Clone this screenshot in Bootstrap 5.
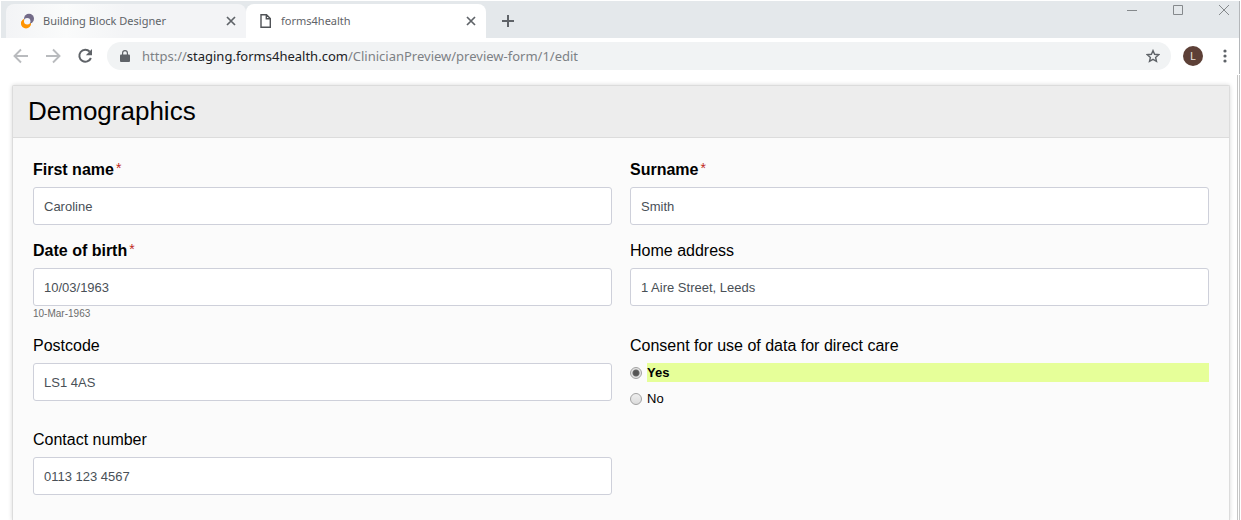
<!DOCTYPE html>
<html lang="en-GB">
<head>
<meta charset="utf-8">
<meta name="viewport" content="width=device-width, initial-scale=1">
<title>forms4health</title>
<link href="https://cdn.jsdelivr.net/npm/bootstrap@5.3.0/dist/css/bootstrap.min.css" rel="stylesheet">
<style>
body{font-family:"Liberation Sans",Arial,sans-serif;color:#000;background:#fff;overflow:hidden}
button{border:0;background:none;padding:0;display:flex;align-items:center;justify-content:center;color:#5f6368}
svg{display:block;flex:none}
.window-top{margin:1px 1px 0;border-right:1px solid #b4b7ba}
.tab-strip{background:#e4e8eb;height:37px;padding:3px 0 0 5px;font:11px/16px "Noto Sans","Open Sans",sans-serif;color:#5f6368}
.browser-tab{width:240px;height:34px;padding:0 10px 0 13px;border-radius:8px 8px 0 0;background:linear-gradient(90deg,#f3f4f6,#fafbfb 25%,#f3f4f6 50%)}
.browser-tab.current{background:#fff}
.browser-tab a,.address a{color:inherit;text-decoration:none}
.new-tab{width:24px;height:34px;margin-left:10px}
.window-buttons{gap:34px;padding-right:9px;height:12px}
.window-buttons button{color:#85898c}
.toolbar{height:36px;gap:12px;padding:0 8px 0 12px}
.nav-buttons{gap:16px;margin-right:2px}
.nav-buttons .inactive{color:#b9bbbe}
.address{height:28px;border-radius:14px;background:#f1f3f4;padding:0 11px 0 13px;font:13px/20px "Noto Sans","Open Sans",sans-serif;color:#7d8185}
.address strong{font-weight:400;color:#202124}
.avatar{width:20px;height:20px;border-radius:50%;background:#5d4037;color:#e8e0dd;font:11px/20px "Noto Sans",sans-serif}
.page-view{margin:1px 1px 0 0;border-right:3px double #c6c6c6;padding:10px 7px 0 12px}
.panel{border:1px solid #dcdcdc;border-bottom:0;border-radius:2px 2px 0 0;background:#fbfbfb;box-shadow:0 0 4px rgba(0,0,0,.16);min-height:calc(100vh - 85px)}
.panel-title{background:#ededed;border-bottom:1px solid #dcdcdc;padding:0 15px;font-size:26px;line-height:51px;margin:0;font-weight:400}
.panel-fields{padding:20px 20px 0}
.panel-fields .row{--bs-gutter-x:18px}
.field{margin-bottom:14px}
.field-label{display:block;font-size:16px;line-height:24px;margin-bottom:5px}
.required{font-weight:700}
.required span{font-size:14px;font-weight:400;line-height:1;color:#c0281c;margin-left:2px;vertical-align:2px}
.form-control{height:38px;border:1px solid #ced0da;border-radius:3px;padding:0 10px;font-size:13px;color:#495057;background:#fff}
.hint{font-size:10px;line-height:14px;padding-top:1px;height:14px;color:#6c6c6c}
fieldset{min-width:0}
.choice{height:19px;margin-bottom:7px;gap:5px;font-size:13px;line-height:19px}
.choice:last-child{margin-bottom:6px}
.choice label{flex:1}
.choice input{appearance:none;width:12px;height:12px;margin:0;border:1px solid #a2a2a2;border-radius:50%;background:linear-gradient(#eee,#dcdcdc)}
.choice input:checked{background:radial-gradient(circle,#555 0 2px,#666 3px,#e4e4e4 4px)}
.choice input:checked + label{background:#e6ff99;font-weight:700}
</style>
<script src="https://cdn.jsdelivr.net/npm/bootstrap@5.3.0/dist/js/bootstrap.bundle.min.js"></script>
</head>
<body>
<header class="window-top">
  <div class="tab-strip d-flex">
    <div class="browser-tab d-flex align-items-center">
      <svg width="16" height="16" viewBox="0 0 16 16"><circle cx="7" cy="10.500" r="5" fill="#ff9400"/><circle cx="10" cy="5.800" r="5" fill="#736b88"/><path d="M2.200 9A5 5 0 0 0 12 10.500Q9.500 12.500 6.500 11.500 4 10.500 4.500 7z" fill="#ff9400"/><circle cx="8.200" cy="8.200" r="3.200" fill="#f5f5f8"/></svg>
      <a class="ms-2 flex-grow-1" href="#">Building Block Designer</a>
      <button type="button" aria-label="Close tab"><svg width="10" height="10" viewBox="0 0 10 10" stroke="currentColor" stroke-width="1.7"><path d="M1 1l8 8M9 1l-8 8"/></svg></button>
    </div>
    <div class="browser-tab current d-flex align-items-center">
      <svg width="14" height="16" viewBox="0 0 14 16" fill="none" stroke="#505357" stroke-width="1.400"><path d="M2 1.700h5.500l3.800 3.800v8.800H2zM7.300 1.700v4h4"/></svg>
      <a class="ms-2 flex-grow-1" href="#">forms4health</a>
      <button type="button" aria-label="Close tab"><svg width="10" height="10" viewBox="0 0 10 10" stroke="currentColor" stroke-width="1.700"><path d="M1 1l8 8M9 1l-8 8"/></svg></button>
    </div>
    <button class="new-tab" type="button" aria-label="New tab"><svg width="12" height="12" viewBox="0 0 12 12" stroke="currentColor" stroke-width="2"><path d="M6 0v12M0 6h12"/></svg></button>
    <div class="window-buttons d-flex ms-auto">
      <button type="button" aria-label="Minimise"><svg width="12" height="12" viewBox="0 0 12 12" stroke="currentColor"><path d="M1 6.500h10"/></svg></button>
      <button type="button" aria-label="Maximise"><svg width="12" height="12" viewBox="0 0 12 12" fill="none" stroke="currentColor"><path d="M1.500 1.500h9v9h-9z"/></svg></button>
      <button type="button" aria-label="Close"><svg width="12" height="12" viewBox="0 0 12 12" stroke="currentColor"><path d="M1 1l10 10M11 1L1 11"/></svg></button>
    </div>
  </div>
  <div class="toolbar d-flex align-items-center">
    <div class="nav-buttons d-flex">
      <button class="inactive" type="button" aria-label="Back"><svg width="16" height="16" viewBox="0 0 16 16" fill="none" stroke="currentColor" stroke-width="1.900"><path d="M15 8H2M8 1.500L1.500 8 8 14.500"/></svg></button>
      <button class="inactive" type="button" aria-label="Forward"><svg width="16" height="16" viewBox="0 0 16 16" fill="none" stroke="currentColor" stroke-width="1.900"><path d="M1 8h13M8 1.500L14.500 8 8 14.500"/></svg></button>
      <button type="button" aria-label="Reload"><svg width="16" height="16" viewBox="0 0 16 16" fill="none" stroke="currentColor" stroke-width="2"><path d="M12.700 3.600A6 6 0 1 0 13.900 10"/><path d="M15 1v6.200H8.800z" fill="currentColor" stroke="none"/></svg></button>
    </div>
    <div class="address d-flex align-items-center flex-grow-1">
      <svg width="10" height="12" viewBox="0 0 10 12"><path d="M1 4.500h8q1 0 1 1V11q0 1-1 1H1q-1 0-1-1V5.500q0-1 1-1z" fill="#5f6368"/><path d="M2.600 5V3a2.400 2.400 0 0 1 4.800 0v2" fill="none" stroke="#5f6368" stroke-width="1.200"/></svg>
      <a class="flex-grow-1 ms-2 ps-1" href="#">https://<strong>staging.forms4health.com</strong>/ClinicianPreview/preview-form/1/edit</a>
      <button type="button" aria-label="Bookmark"><svg width="14" height="14" viewBox="0 0 14 14" fill="none" stroke="currentColor" stroke-width="1.400"><path d="M7 1.600l1.600 3.700 4.100.4-3.100 2.700.9 4L7 10.300l-3.500 2.100.9-4L1.300 5.700l4.100-.4z"/></svg></button>
    </div>
    <button class="avatar" type="button" aria-label="Profile">L</button>
    <button class="ms-1" type="button" aria-label="Menu"><svg width="12" height="16" viewBox="0 0 12 16" fill="currentColor"><circle cx="6" cy="3" r="1.600"/><circle cx="6" cy="8" r="1.600"/><circle cx="6" cy="13" r="1.600"/></svg></button>
  </div>
</header>
<main class="page-view">
  <form class="panel">
    <h1 class="panel-title">Demographics</h1>
    <div class="panel-fields">
      <div class="row">
        <div class="col-6 field">
          <label class="field-label required" for="first">First name<span>*</span></label>
          <input class="form-control" id="first" type="text" value="Caroline">
        </div>
        <div class="col-6 field">
          <label class="field-label required" for="surname">Surname<span>*</span></label>
          <input class="form-control" id="surname" type="text" value="Smith">
        </div>
        <div class="col-6 field">
          <label class="field-label required" for="dob">Date of birth<span>*</span></label>
          <input class="form-control" id="dob" type="text" value="10/03/1963">
          <div class="hint">10-Mar-1963</div>
        </div>
        <div class="col-6 field">
          <label class="field-label" for="addr">Home address</label>
          <input class="form-control" id="addr" type="text" value="1 Aire Street, Leeds">
        </div>
        <div class="col-6 field">
          <label class="field-label" for="post">Postcode</label>
          <input class="form-control" id="post" type="text" value="LS1 4AS">
        </div>
        <fieldset class="col-6 field">
          <legend class="field-label">Consent for use of data for direct care</legend>
          <div class="choice d-flex align-items-center"><input type="radio" name="consent" id="yes" checked><label for="yes">Yes</label></div>
          <div class="choice d-flex align-items-center"><input type="radio" name="consent" id="no"><label for="no">No</label></div>
        </fieldset>
        <div class="col-6 field">
          <label class="field-label" for="phone">Contact number</label>
          <input class="form-control" id="phone" type="text" value="0113 123 4567">
        </div>
      </div>
    </div>
  </form>
</main>
</body>
</html>
